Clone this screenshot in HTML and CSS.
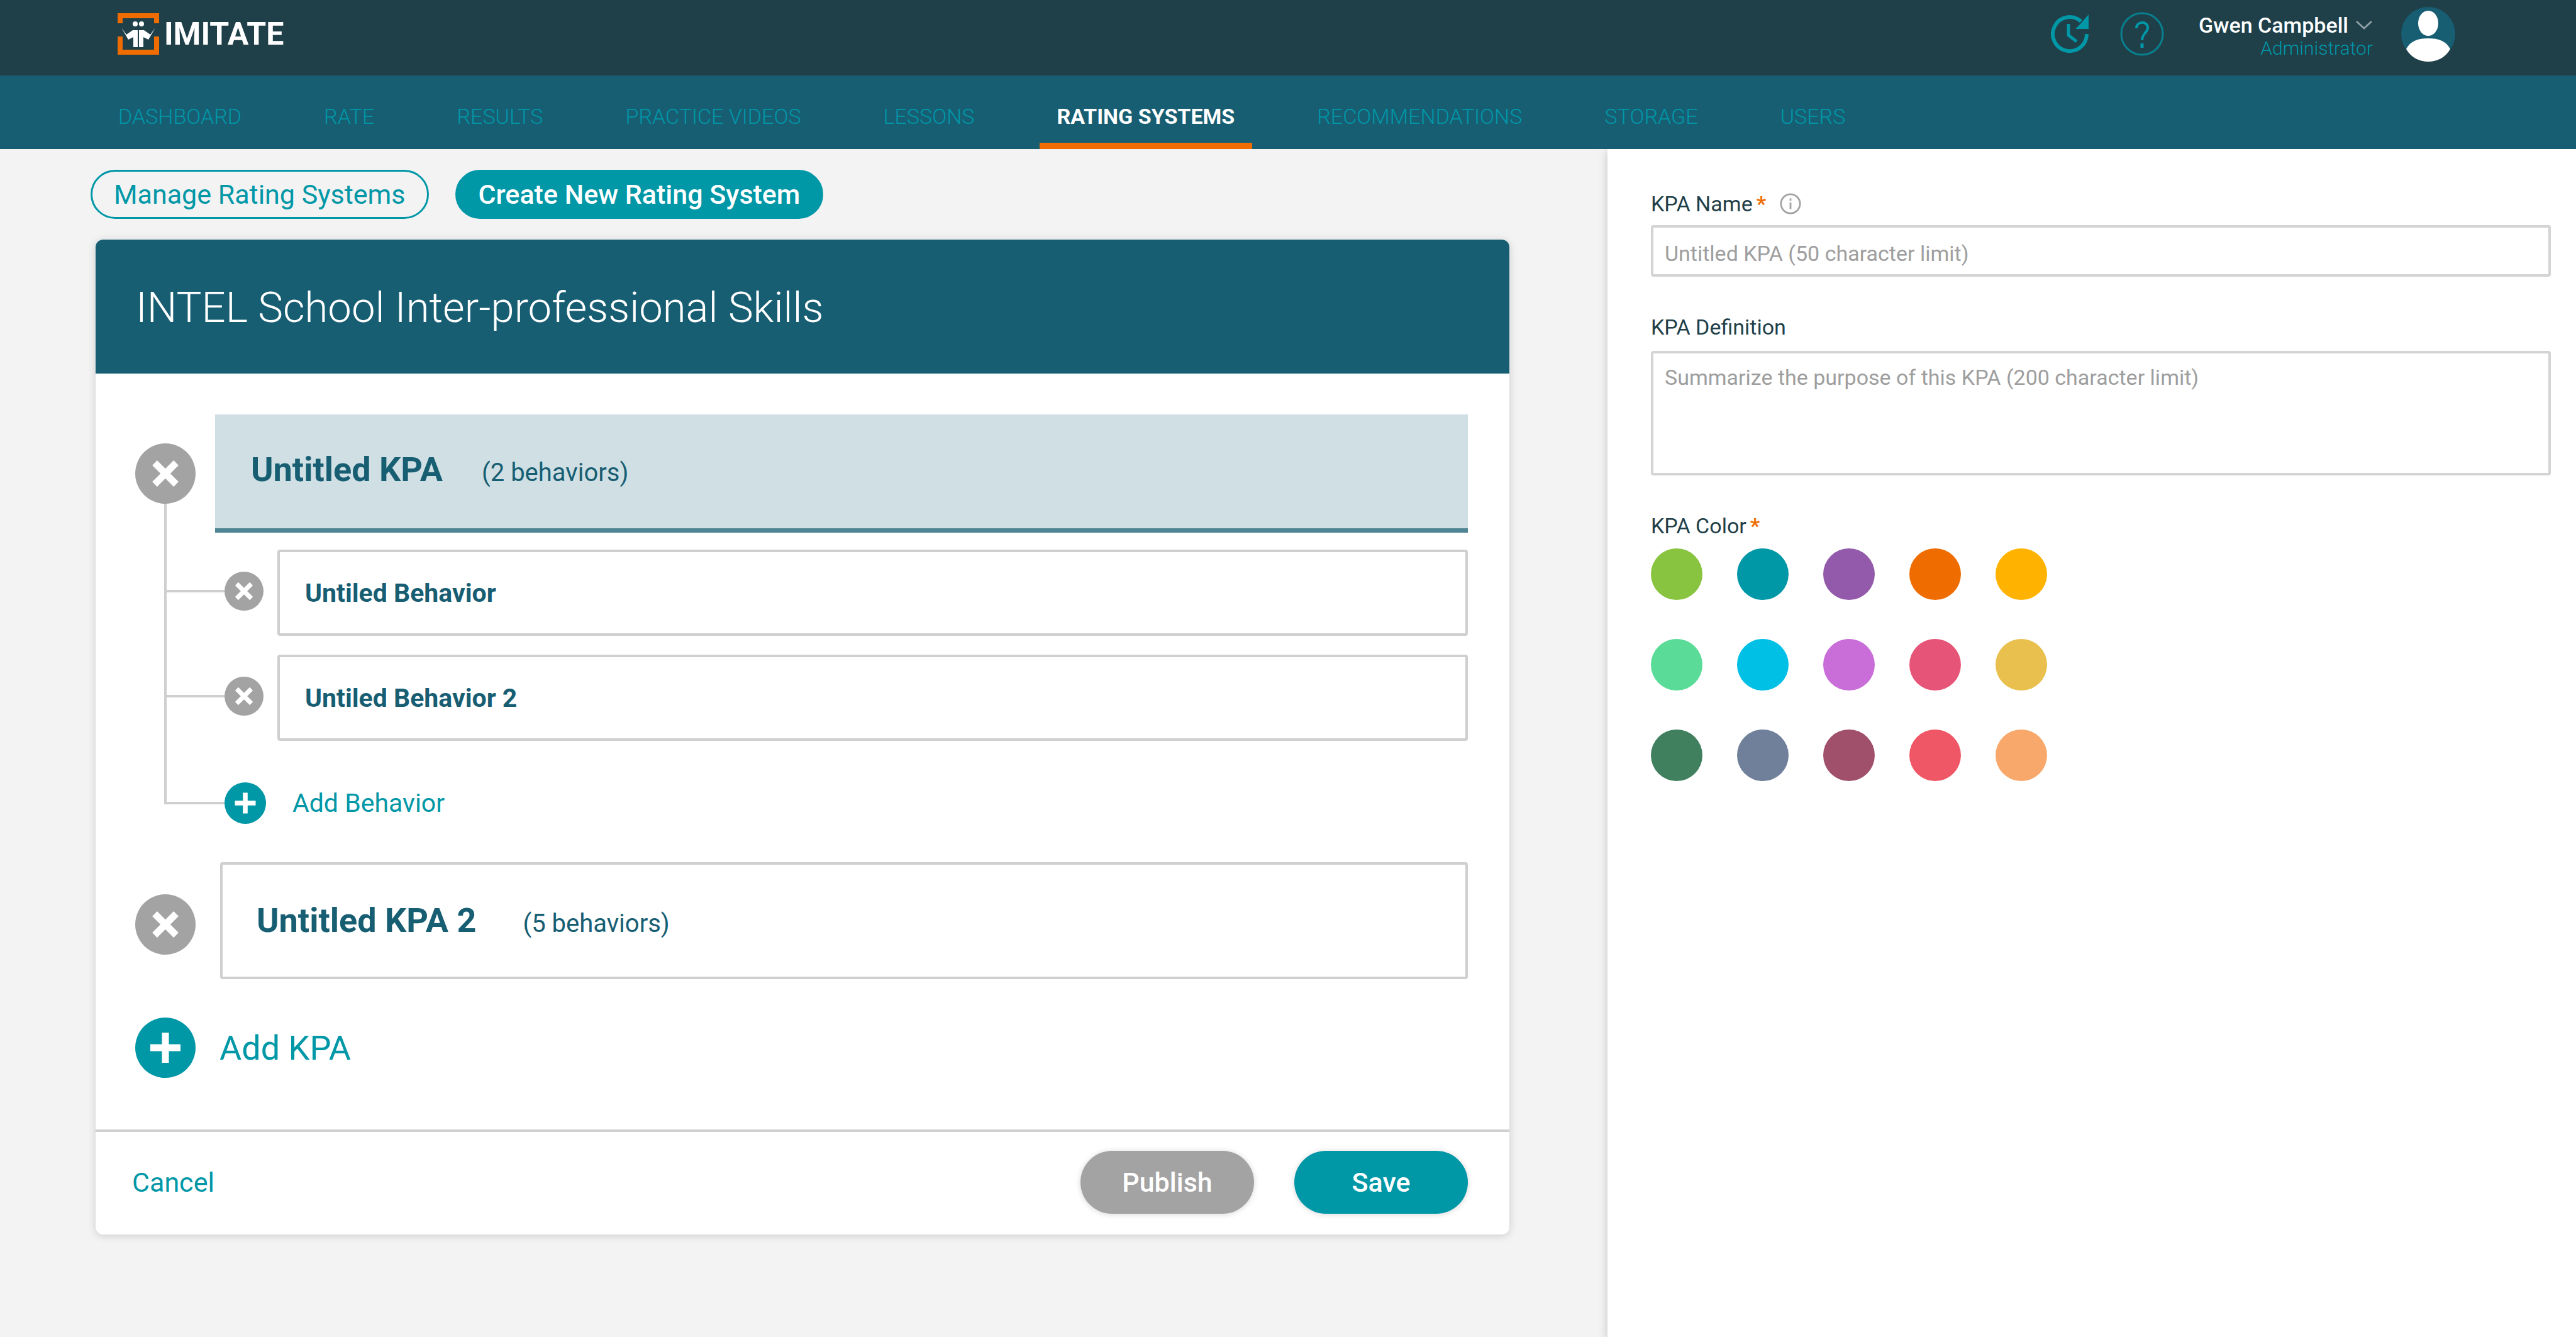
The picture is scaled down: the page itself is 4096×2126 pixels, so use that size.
FILE: index.html
```html
<!DOCTYPE html>
<html lang="en">
<head>
<meta charset="utf-8">
<title>Imitate – Rating Systems</title>
<link rel="stylesheet" href="styles.css">
</head>
<body>
<header class="topbar">
  <a class="brand" href="#">
    <svg class="brand-mark" viewBox="0 0 66 66" aria-hidden="true">
      <path d="M4 16V4H62V16M4 37V62H62V37" fill="none" stroke="#ef6c00" stroke-width="8"/>
      <g fill="#fff">
        <circle cx="28" cy="17" r="4"/>
        <circle cx="38" cy="17" r="4"/>
        <path d="M6 23L14 34L24 27H32V54H25V38L17 42Z"/>
        <path d="M60 23L52 34L42 27H34V54H41V38L49 42Z"/>
      </g>
    </svg>
    <span class="brand-name">IMITATE</span>
  </a>
  <div class="tools">
    <button class="tool" type="button" aria-label="History">
      <svg width="66" height="66" viewBox="0 0 66 66" fill="none" stroke="#0097a7" stroke-width="6">
        <path d="M58 33A27 27 0 1 1 49 13"/>
        <path d="M29 17V35L42 45" stroke-width="5"/>
        <path d="M61 2V25H40L47 18Z" fill="#0097a7" stroke="none"/>
      </svg>
    </button>
    <button class="tool" type="button" aria-label="Help">
      <svg width="72" height="72" viewBox="0 0 72 72" fill="none" stroke="#0097a7">
        <circle cx="36" cy="36" r="33" stroke-width="3" opacity=".75"/>
        <path d="M27 27C27 15 45 15 45 26C45 34 36 35 36 46" stroke-width="4"/>
        <path d="M36 51V58" stroke-width="5"/>
      </svg>
    </button>
    <button class="account" type="button">
      <span class="account-text">
        <span class="account-name">Gwen Campbell
          <svg width="28" height="16" viewBox="0 0 28 16" fill="none" stroke="#8fa0a5" stroke-width="3"><path d="M2 2L14 13L26 2"/></svg>
        </span>
        <span class="account-role">Administrator</span>
      </span>
      <svg width="88" height="88" viewBox="0 0 88 88" aria-hidden="true">
        <circle cx="44" cy="44" r="43" fill="#175e73"/>
        <ellipse cx="44" cy="27" rx="16" ry="20" fill="#fff"/>
        <path d="M9 68C16 55 27 51 44 51C61 51 72 55 79 68C71 82 58 88 44 88C30 88 17 82 9 68Z" fill="#fff"/>
      </svg>
    </button>
  </div>
</header>

<nav class="nav">
  <a class="nav-link" href="#">DASHBOARD</a>
  <a class="nav-link" href="#">RATE</a>
  <a class="nav-link" href="#">RESULTS</a>
  <a class="nav-link" href="#">PRACTICE VIDEOS</a>
  <a class="nav-link" href="#">LESSONS</a>
  <a class="nav-link nav-link--active" href="#" aria-current="page">RATING SYSTEMS</a>
  <a class="nav-link" href="#">RECOMMENDATIONS</a>
  <a class="nav-link" href="#">STORAGE</a>
  <a class="nav-link" href="#">USERS</a>
</nav>

<div class="layout">
  <main class="main">
    <div class="tabs">
      <button class="tab" type="button">Manage Rating Systems</button>
      <button class="tab tab--active" type="button">Create New Rating System</button>
    </div>

    <section class="card">
      <h1 class="card-title">INTEL School Inter-professional Skills</h1>
      <div class="card-body">
        <div class="kpa kpa--open">
          <div class="kpa-head">
            <button class="round" type="button" aria-label="Remove KPA">
              <svg viewBox="0 0 96 96"><path d="M31 31L65 65M65 31L31 65"/></svg>
            </button>
            <button class="kpa-box kpa-box--selected" type="button">
              <span class="kpa-name">Untitled KPA</span>
              <span class="kpa-count">(2 behaviors)</span>
            </button>
          </div>
          <ul class="behaviors">
            <li class="behavior">
              <span class="branch"></span>
              <button class="round round--small" type="button" aria-label="Remove behavior">
                <svg viewBox="0 0 96 96"><path d="M30 30L66 66M66 30L30 66"/></svg>
              </button>
              <button class="behavior-box" type="button">Untiled Behavior</button>
            </li>
            <li class="behavior">
              <span class="branch"></span>
              <button class="round round--small" type="button" aria-label="Remove behavior">
                <svg viewBox="0 0 96 96"><path d="M30 30L66 66M66 30L30 66"/></svg>
              </button>
              <button class="behavior-box" type="button">Untiled Behavior 2</button>
            </li>
            <li class="behavior behavior--add">
              <span class="branch"></span>
              <button class="add add--small" type="button">
                <span class="round round--add"><svg viewBox="0 0 96 96"><path d="M48 24V72M24 48H72"/></svg></span>
                Add Behavior
              </button>
            </li>
          </ul>
        </div>

        <div class="kpa kpa--closed">
          <div class="kpa-head">
            <button class="round" type="button" aria-label="Remove KPA">
              <svg viewBox="0 0 96 96"><path d="M31 31L65 65M65 31L31 65"/></svg>
            </button>
            <button class="kpa-box" type="button">
              <span class="kpa-name">Untitled KPA 2</span>
              <span class="kpa-count">(5 behaviors)</span>
            </button>
          </div>
        </div>

        <button class="add" type="button">
          <span class="round round--add"><svg viewBox="0 0 96 96"><path d="M48 24V72M24 48H72"/></svg></span>
          Add KPA
        </button>
      </div>
      <div class="card-footer">
        <a class="cancel" href="#">Cancel</a>
        <button class="action action--muted" type="button">Publish</button>
        <button class="action" type="button">Save</button>
      </div>
    </section>
  </main>

  <aside class="panel">
    <form class="form">
      <div class="field">
        <div class="label-row">
          <label class="label" for="kpa-name">KPA Name<span class="required">*</span></label>
          <svg width="34" height="34" viewBox="0 0 36 36" fill="none" stroke="#a3a3a3" stroke-width="3" aria-hidden="true">
            <circle cx="18" cy="18" r="16"/><path d="M18 16V27M18 9V13"/>
          </svg>
        </div>
        <input class="input" id="kpa-name" type="text" placeholder="Untitled KPA (50 character limit)">
      </div>
      <div class="field">
        <label class="label" for="kpa-definition">KPA Definition</label>
        <textarea class="input input--area" id="kpa-definition" placeholder="Summarize the purpose of this KPA (200 character limit)"></textarea>
      </div>
      <fieldset class="field">
        <legend class="label">KPA Color<span class="required">*</span></legend>
        <div class="swatches">
          <input class="swatch swatch--lime" type="radio" name="color" aria-label="Lime">
          <input class="swatch swatch--teal" type="radio" name="color" aria-label="Teal">
          <input class="swatch swatch--purple" type="radio" name="color" aria-label="Purple">
          <input class="swatch swatch--orange" type="radio" name="color" aria-label="Orange">
          <input class="swatch swatch--amber" type="radio" name="color" aria-label="Amber">
          <input class="swatch swatch--mint" type="radio" name="color" aria-label="Mint">
          <input class="swatch swatch--cyan" type="radio" name="color" aria-label="Cyan">
          <input class="swatch swatch--orchid" type="radio" name="color" aria-label="Orchid">
          <input class="swatch swatch--pink" type="radio" name="color" aria-label="Pink">
          <input class="swatch swatch--gold" type="radio" name="color" aria-label="Gold">
          <input class="swatch swatch--green" type="radio" name="color" aria-label="Green">
          <input class="swatch swatch--slate" type="radio" name="color" aria-label="Slate">
          <input class="swatch swatch--plum" type="radio" name="color" aria-label="Plum">
          <input class="swatch swatch--coral" type="radio" name="color" aria-label="Coral">
          <input class="swatch swatch--peach" type="radio" name="color" aria-label="Peach">
        </div>
      </fieldset>
    </form>
  </aside>
</div>
</body>
</html>
```
FILE: styles.css
```css
:root {
  --teal: #0097a7;
  --deep: #175e73;
  --ink: #1f3f49;
  --orange: #ef6c00;
  --grey: #a3a3a3;
  --line: #cfcfcf;
}

* { box-sizing: border-box; }

body {
  margin: 0;
  min-height: 100vh;
  display: flex;
  flex-direction: column;
  background: #f3f3f3;
  color: var(--deep);
  font-family: Roboto, "Liberation Sans", sans-serif;
  font-size: 40px;
}

button, input, textarea { font: inherit; color: inherit; }
button { padding: 0; border: 0; background: none; cursor: pointer; }
a { color: inherit; text-decoration: none; }
svg { display: block; flex: none; }

/* Top bar */
.topbar {
  display: flex;
  align-items: center;
  justify-content: space-between;
  height: 120px;
  padding: 0 191px 12px 187px;
  background: var(--ink);
}
.brand { display: flex; align-items: center; gap: 8px; color: #fff; }
.brand-mark { width: 66px; height: 66px; }
.brand-name { font-size: 50px; font-weight: 700; line-height: 56px; }
.tools { display: flex; align-items: center; }
.tool { margin-right: 44px; }
.account { display: flex; align-items: center; gap: 44px; margin-left: 10px; }
.account-text { display: flex; flex-direction: column; align-items: flex-end; padding-top: 8px; }
.account-name {
  display: flex;
  align-items: center;
  gap: 11px;
  color: #fff;
  font-size: 34px;
  font-weight: 500;
  line-height: 38px;
}
.account-role { color: var(--teal); font-size: 30px; font-weight: 300; line-height: 36px; }

/* Navigation */
.nav {
  display: flex;
  gap: 75px;
  height: 117px;
  padding: 0 160px;
  background: var(--deep);
}
.nav-link {
  display: flex;
  align-items: center;
  padding: 22px 28px 0;
  border-bottom: 10px solid transparent;
  color: var(--teal);
  font-size: 34px;
  font-weight: 300;
  white-space: nowrap;
}
.nav-link--active { border-bottom-color: var(--orange); color: #fff; font-weight: 700; }

/* Page */
.layout {
  flex: 1;
  display: grid;
  grid-template-columns: 1fr 1540px;
}
.main { padding: 33px 156px 80px 144px; }

.tabs { display: flex; gap: 42px; }
.tab {
  height: 78px;
  padding: 0 34px;
  border: 3px solid var(--teal);
  border-radius: 39px;
  color: var(--teal);
  font-size: 43px;
}
.tab--active { background: var(--teal); color: #fff; font-weight: 500; }

/* Card */
.card {
  margin: 33px 0 0 8px;
  overflow: hidden;
  border-radius: 12px;
  background: #fff;
  box-shadow: 0 2px 14px rgba(0, 0, 0, .16);
}
.card-title {
  margin: 0;
  padding: 4px 64px 0;
  background: var(--deep);
  color: #fff;
  font-size: 67px;
  font-weight: 300;
  line-height: 209px;
}
.card-body { padding: 65px 66px 82px 63px; }
.card-footer {
  display: flex;
  align-items: center;
  gap: 64px;
  padding: 30px 66px 33px 58px;
  border-top: 4px solid var(--line);
}
.cancel { margin-right: auto; color: var(--teal); font-size: 43px; }
.action {
  width: 276px;
  height: 100px;
  border-radius: 50px;
  background: var(--teal);
  box-shadow: 0 1px 10px rgba(0, 0, 0, .16);
  color: #fff;
  font-size: 43px;
  font-weight: 500;
}
.action--muted { background: var(--grey); }

/* KPA tree */
.kpa { position: relative; margin-bottom: 61px; }
.kpa--open::before {
  content: "";
  position: absolute;
  left: 46px;
  top: 110px;
  bottom: 31px;
  width: 4px;
  background: var(--line);
}
.kpa-head { position: relative; display: flex; align-items: center; gap: 31px; }
.round {
  flex: none;
  width: 96px;
  height: 96px;
  border-radius: 50%;
  background: var(--grey);
}
.round svg { width: 100%; height: 100%; fill: none; stroke: #fff; stroke-width: 11; }
.round--small { width: 62px; height: 62px; }
.round--add { background: var(--teal); }
.kpa-box {
  flex: 1;
  display: flex;
  align-items: baseline;
  gap: 74px;
  height: 186px;
  padding: 57px 54px 0;
  border: 4px solid var(--line);
  border-radius: 4px;
  text-align: left;
}
.kpa-box--selected {
  gap: 62px;
  height: 188px;
  padding: 56px 57px 0;
  border: 0;
  border-bottom: 7px solid #4f8492;
  border-radius: 0;
  background: #cfdfe3;
}
.kpa-name { font-size: 54px; font-weight: 700; line-height: 64px; }
.kpa-count { font-size: 40px; }
.kpa--closed .kpa-box { margin-left: 8px; }
.kpa--closed .round { margin-top: 12px; }

.behaviors { margin: 27px 0 0; padding: 0 0 0 50px; list-style: none; }
.behavior { display: flex; align-items: center; margin-bottom: 30px; }
.behavior--add { margin: 66px 0 0; }
.branch { width: 92px; height: 4px; background: var(--line); }
.behavior .round--small { margin-right: 22px; }
.behavior:not(.behavior--add) .branch,
.behavior .round--small { margin-bottom: 6px; }
.behavior-box {
  flex: 1;
  height: 137px;
  padding: 0 40px;
  border: 4px solid var(--line);
  border-radius: 4px;
  font-size: 41px;
  font-weight: 700;
  text-align: left;
}

.add { display: flex; align-items: center; gap: 38px; color: var(--teal); font-size: 54px; }
.add--small { gap: 42px; font-size: 41px; }
.add--small .round { width: 66px; height: 66px; }

/* Side panel */
.panel {
  padding: 67px 40px 40px 69px;
  background: #fff;
  box-shadow: 0 4px 14px rgba(0, 0, 0, .2);
  clip-path: inset(0 0 0 -20px);
}
.form { display: flex; flex-direction: column; gap: 60px; }
.field { display: flex; flex-direction: column; gap: 14px; margin: 0; padding: 0; border: 0; }
.label-row { display: flex; align-items: center; gap: 22px; }
.label { padding: 0; color: var(--ink); font-size: 34px; line-height: 40px; }
.required { margin-left: 6px; color: var(--orange); font-weight: 700; }
.input {
  width: 100%;
  height: 82px;
  padding: 8px 18px 0;
  border: 4px solid #d4d4d4;
  border-radius: 4px;
  background: #fff;
  font-size: 34px;
  line-height: 40px;
  outline: 0;
}
.input::placeholder { color: #9e9e9e; opacity: 1; }
.input--area { height: 198px; margin-top: 4px; padding-top: 18px; resize: none; }

.swatches {
  display: grid;
  grid-template-columns: repeat(5, 82px);
  gap: 62px 55px;
  margin-top: 16px;
}
.swatch { width: 82px; height: 82px; margin: 0; border-radius: 50%; appearance: none; }
.swatch--lime { background: #88c440; }
.swatch--teal { background: #0097a7; }
.swatch--purple { background: #935aab; }
.swatch--orange { background: #ef6c00; }
.swatch--amber { background: #ffb300; }
.swatch--mint { background: #5adc98; }
.swatch--cyan { background: #00c0e5; }
.swatch--orchid { background: #c96ed8; }
.swatch--pink { background: #e65578; }
.swatch--gold { background: #e9c04e; }
.swatch--green { background: #40805f; }
.swatch--slate { background: #70809a; }
.swatch--plum { background: #a0506a; }
.swatch--coral { background: #f05766; }
.swatch--peach { background: #f8a86a; }
```
